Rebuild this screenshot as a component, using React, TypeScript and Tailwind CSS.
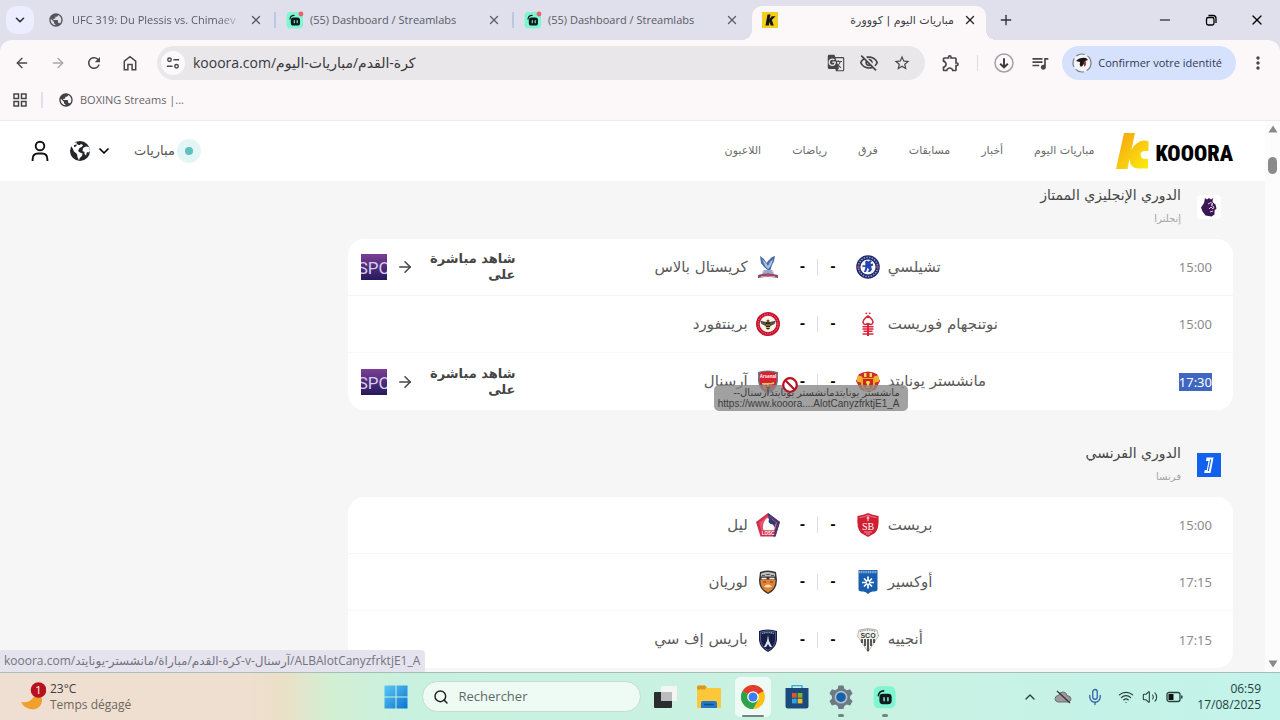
import type { ReactNode } from "react";
import {
  MdPublic,
  MdGTranslate,
  MdOutlineVisibilityOff,
  MdStarOutline,
  MdOutlineExtension,
  MdQueueMusic,
  MdMoreVert,
  MdRefresh,
  MdOutlineGridView,
} from "react-icons/md";
import {
  ArrowLeft,
  ArrowRight,
  ChevronDown,
  ChevronUp,
  Mic,
  Minus,
  Plus,
  Search,
  Volume2,
  Wifi,
  X,
} from "lucide-react";

const SHIELD = "M3 3Q12 0 21 3V12Q20 20 12 24Q4 20 3 12Z";

function Crest({ label, children }: { label: string; children: ReactNode }) {
  return (
    <svg viewBox="0 0 24 24" className="size-6 shrink-0" role="img" aria-label={label}>
      {children}
    </svg>
  );
}

const crests: Record<string, ReactNode> = {
  chelsea: (
    <>
      <circle cx="12" cy="12" r="11.8" fill="#1c2a6d" />
      <circle cx="12" cy="12" r="9.6" fill="none" stroke="#8d94c2" strokeWidth="1.6" strokeDasharray="1.5 1.2" />
      <circle cx="12" cy="12" r="7.6" fill="#f5f7ff" />
      <circle cx="2.4" cy="12" r="1.2" fill="#c23a52" />
      <circle cx="21.6" cy="12" r="1.2" fill="#c23a52" />
      <path d="M9 7l1.500-1.500 2 1 2-1.500 1.500 1.500-1.500 1 .5 1.500 2-.500v2l-2 1 1 3-2 2.500h-2l1-3-1.500-1-1.500 4H8l1.500-4.500-1.500-1-1.500 1V10l2 .500 1-1z" fill="#2742a8" />
    </>
  ),
  palace: (
    <>
      <path d="M4 1l4 3 2.500 4L12 6l4-4 3-1-1 5-2 4-1.500 5h-3L8 12 5 8z" fill="#4a6ba8" />
      <path d="M6 4l4 4 2 3 2-4 3-3-1 4-2 4-2 2-3-3z" fill="#a9bfde" />
      <path d="M7 15h10l2 6H5z" fill="#c8cedd" />
      <path d="M8 16h8M7 18h10" stroke="#5b74a8" strokeWidth=".8" />
      <path d="M2 20q10-3 20 0v3q-10-2-20 0z" fill="#8e4a6c" />
      <path d="M5 21.500h14" stroke="#d9c7d8" strokeWidth=".7" />
      <circle cx="12" cy="20" r="1.800" fill="#c8435a" />
    </>
  ),
  forest: (
    <>
      <path d="M12 4C8 6.500 6.200 9.500 7.500 11.500q1.500 1.800 4.500 0 3 1.800 4.500 0C17.800 9.500 16 6.500 12 4z" fill="none" stroke="#d9263a" strokeWidth="1.500" />
      <path d="M11 11h2v13h-2z" fill="#d9263a" />
      <path d="M6.500 14.800h11M6.500 17h11M7.500 19.200h9M6.500 22h11" stroke="#d9263a" strokeWidth="1.600" />
      <circle cx="10.300" cy="1.300" r=".9" fill="#d9263a" />
      <circle cx="13.700" cy="1.300" r=".9" fill="#d9263a" />
    </>
  ),
  brentford: (
    <>
      <circle cx="12" cy="12" r="12" fill="#c8102e" />
      <circle cx="12" cy="12" r="9.900" fill="none" stroke="#e98291" strokeWidth="1" strokeDasharray="1.300 1.200" />
      <circle cx="12" cy="12" r="8.300" fill="#fbf4ea" />
      <path d="M4 8.500l6 1.500h4l6-1.500-1.500 3.500-4 2h-5l-4-2z" fill="#5a5145" />
      <ellipse cx="12" cy="13.500" rx="2.300" ry="4" fill="#2a241c" />
      <path d="M10 13h4M10 15.500h4" stroke="#e6b94a" strokeWidth=".9" />
      <circle cx="12" cy="9" r="1.500" fill="#6a5335" />
    </>
  ),
  united: (
    <>
      <path d="M3 4Q12-1 21 4l3 7-4 8q-8 6-16 0L0 11z" fill="#c9302b" />
      <path d="M1 6.500q5-2 6 2l-2 4-4-1zM23 6.500q-5-2-6 2l2 4 4-1z" fill="#f0b32c" />
      <path d="M5 8h14v7q-2 6-7 7-5-1-7-7z" fill="#e9a726" />
      <path d="M7 9h10v5q-1 5-5 6-4-1-5-6z" fill="#cd2128" />
      <path d="M8 3h2.500v4H8zM13.500 3H16v4h-2.500z" fill="#f7d64a" />
      <path d="M10.500 11h3l.5 2-1 1 1 4h-4l1-4-1-1z" fill="#fbdc3b" />
    </>
  ),
  arsenal: (
    <>
      <path d="M2 2Q12-1 22 2v9q-1 9-10 13Q3 20 2 11z" fill="#6d7687" />
      <path d="M3.500 3Q12 0 20.500 3v8q-1 8-8.500 11.500Q4.500 19 3.500 11z" fill="#d8222f" />
      <text x="12" y="7.500" fontSize="4.500" fontWeight="700" textAnchor="middle" fill="#fff" fontFamily="Liberation Sans">Arsenal</text>
      <path d="M6 13h9l3-1v2l-3 .600H6z" fill="#e3c46a" />
      <circle cx="10" cy="16" r="2.300" fill="none" stroke="#e3c46a" strokeWidth="1.100" />
    </>
  ),
  brest: (
    <>
      <path d="M1.500 3Q8 2 12 0q4 2 10.500 3 1 13-3.500 17l-7 4-7-4Q.500 16 1.500 3z" fill="#d01e32" />
      <path d="M3.500 4.500Q9 4 12 2q3 2 8.500 2.500" fill="none" stroke="#f0a7ae" strokeWidth=".7" />
      <path d="M12 3v5M10.500 5h3" stroke="#fbdfe2" strokeWidth="1" />
      <text x="12" y="16.500" fontSize="10" textAnchor="middle" fill="#fff" fontFamily="Liberation Serif">SB</text>
      <path d="M8 19h8M10 21h4" stroke="#f0a7ae" strokeWidth=".9" />
    </>
  ),
  lille: (
    <>
      <path d="M12 0L24 9l-4.500 14.500h-15L0 9z" fill="#cf2e4c" />
      <path d="M12 0L24 9l-4.500 14.500H17L20.500 10 12 3.500z" fill="#3c3a78" />
      <path d="M12 2.800L21 9.800 17.800 21H6.200L3 9.800z" fill="#e8536b" />
      <path d="M11 5l6 2 2.500 4-1.500 6.500H7.500Q5.500 10 11 5z" fill="#fff" />
      <path d="M12 3l8 6.500-1.500 5-1.500-3-2.500-.500-2-2 .500-2.500z" fill="#2d3a72" />
      <path d="M5 17.500h14l-1 4.500H6z" fill="#cf2e4c" />
      <text x="12" y="21.500" fontSize="4.500" fontWeight="700" textAnchor="middle" fill="#fff" fontFamily="Liberation Sans">LOSC</text>
    </>
  ),
  auxerre: (
    <>
      <path d="M2.500 0h19v20q-1 1.500-5 1.500-3 .500-4.500 2.500-1.500-2-4.500-2.500-4 0-5-1.500z" fill="#1a5fae" />
      <path d="M3 2h18" stroke="#8cb4de" strokeWidth="2.400" strokeDasharray="1.200 .6" />
      <path d="M12 6.500v12M6 12.500h12M8 8.500l8 8M16 8.500l-8 8" stroke="#fff" strokeWidth="1.700" />
      <circle cx="12" cy="12.500" r="1.200" fill="#1a5fae" />
    </>
  ),
  lorient: (
    <>
      <path d="M4 2Q12-1 20 2l1 8q0 10-9 14-9-4-9-14z" fill="#3a3538" />
      <path d="M4.500 9.500h15q.5 9.500-7.500 13Q4 19 4.500 9.500z" fill="#e2812f" />
      <path d="M5 3.500q7-3 14 0v3H5z" fill="#bdbcc0" />
      <path d="M6 5.500h3M10 4.500h4M15 5.500h3" stroke="#56525a" strokeWidth="1" />
      <path d="M5.500 8.500h5M13.500 8.500h5" stroke="#f2ece6" strokeWidth="1.300" />
      <path d="M8 16.500q4-4 8 0-4 2-8 0z" fill="#f3e1cc" />
      <path d="M7 12h3M14 12h3" stroke="#6d4426" strokeWidth="1.200" />
    </>
  ),
  angers: (
    <>
      <path d="M3 2Q12-1 21 2l1.500 6L12 24 1.500 8z" fill="#f1f1ee" stroke="#8d8d88" strokeWidth=".6" />
      <path d="M4 3.500Q12 .500 20 3.500" fill="none" stroke="#85857e" strokeWidth="1.300" strokeDasharray="1 .8" />
      <text x="12" y="10" fontSize="7" fontWeight="700" textAnchor="middle" fill="#3b3b38" fontFamily="Liberation Sans">SCO</text>
      <path d="M6 11v4M9 11v7M12 11v12M15 11v7M18 11v4" stroke="#262624" strokeWidth="1.500" />
    </>
  ),
  paris: (
    <>
      <path d={SHIELD} fill="#171f45" />
      <path d="M4.500 4Q12 1.500 19.500 4v8q-1 7-7.500 10.300Q5.500 19 4.500 12z" fill="none" stroke="#6574a4" strokeWidth=".7" />
      <path d="M6 5.500q6-2 12 0" stroke="#8d9ac0" strokeWidth="1.500" fill="none" strokeDasharray="1.200 .6" />
      <path d="M12 7l1 6 3 6h-2.200L12 16l-1.800 3H8l3-6z" fill="#dce4f5" />
    </>
  ),
};

function StreamlabsIcon({ className, badge }: { className: string; badge?: boolean }) {
  return (
    <svg viewBox="0 0 18 18" className={className} aria-hidden="true">
      <rect x="0.500" y="1" width="16.500" height="16.500" rx="4" fill="#80f5d2" />
      <path d="M4 8q.600-3.500 4-3.600" stroke="#0b1a1c" strokeWidth="1.200" fill="none" strokeLinecap="round" />
      <rect x="4.800" y="6.500" width="9.200" height="8" rx="2.600" fill="#0b1a1c" />
      <path d="M8.300 9.600v2.200M11.200 9.600v2.200" stroke="#80f5d2" strokeWidth="1.100" strokeLinecap="round" />
      {badge && <circle cx="15" cy="3" r="2.400" fill="#e5636f" />}
    </svg>
  );
}

function TabClose() {
  return (
    <button aria-label="Fermer l'onglet" className="ml-auto flex size-4 items-center justify-center">
      <X className="size-3.5" strokeWidth={2.200} />
    </button>
  );
}

function TabStrip() {
  return (
    <div className="flex h-10 shrink-0 items-end bg-[#dfe0eb] text-[#2f3037]">
      <button aria-label="Rechercher dans les onglets" className="mb-1.5 ml-1.5 flex size-7 shrink-0 items-center justify-center rounded-[10px] bg-[#eceeff]">
        <ChevronDown className="size-3.5" strokeWidth={2.800} />
      </button>
      <div role="tablist" className="flex min-w-0 self-stretch text-[11px] text-[#5a5b64]">
        <div className="flex w-[242px] min-w-0 items-center pl-3.5">
          <MdPublic className="size-4 shrink-0 text-[#55565c]" />
          <button role="tab" aria-selected="false" className="ml-2 w-[172px] overflow-hidden text-left whitespace-nowrap [mask-image:linear-gradient(to_right,#000_85%,transparent)]">
            UFC 319: Du Plessis vs. Chimaev
          </button>
          <TabClose />
          <span className="ml-2.5 h-4 w-0.5 shrink-0 bg-[#b9c9e4]" />
        </div>
        {[0, 1].map((i) => (
          <div key={i} className="flex w-[238px] min-w-0 items-center pl-2.5">
            <StreamlabsIcon className="size-[18px] shrink-0" badge />
            <button role="tab" aria-selected="false" className="ml-1.5 truncate text-left">
              (55) Dashboard / Streamlabs
            </button>
            <TabClose />
            <span className={i === 0 ? "ml-2.5 h-4 w-0.5 shrink-0 bg-[#b9c9e4]" : "ml-2.5 w-0.5 shrink-0"} />
          </div>
        ))}
        <div className="relative mt-1.5 flex w-[234px] min-w-0 items-center rounded-t-[10px] bg-[#fcf8f9] pr-2 pl-2.5">
          <span className="absolute bottom-0 -left-2.5 size-2.5 bg-[radial-gradient(circle_at_0_0,transparent_10px,#fcf8f9_10px)]" />
          <span className="absolute -right-2.5 bottom-0 size-2.5 bg-[radial-gradient(circle_at_100%_0,transparent_10px,#fcf8f9_10px)]" />
          <svg viewBox="0 0 16 16" className="mb-1.5 size-4 shrink-0" aria-hidden="true">
            <rect width="16" height="16" fill="#f2cf1d" />
            <path d="M5.500 2.500h3l-.9 4.300 2.200-2.500h3.700L9.800 8l2 5.500H8.700L7.500 9.800l-.6 3.700H3.500z" fill="#16140a" />
          </svg>
          <button role="tab" aria-selected="true" dir="rtl" className="mb-1 ml-auto font-['DejaVu_Sans',sans-serif] text-[11px] text-[#3c3d42]">
            مباريات اليوم | كووورة
          </button>
          <button aria-label="Fermer l'onglet" className="mb-1.5 ml-2 flex size-4 items-center justify-center text-[#222]">
            <X className="size-3.5" strokeWidth={2.200} />
          </button>
        </div>
      </div>
      <button aria-label="Nouvel onglet" className="mb-3 ml-3 flex size-4 items-center justify-center">
        <Plus className="size-4" />
      </button>
      <div className="ml-auto flex items-center gap-[30px] pr-[15px] pb-3 text-black">
        <button aria-label="Réduire"><Minus className="size-4" strokeWidth={1.500} /></button>
        <button aria-label="Restaurer">
          <svg viewBox="0 0 16 16" className="size-4" fill="none" stroke="currentColor" strokeWidth="1.300" aria-hidden="true">
            <rect x="3.500" y="5.500" width="7.500" height="7.500" rx="1.800" />
            <path d="M5.500 3.500h4.500a3 3 0 0 1 3 3V11" />
          </svg>
        </button>
        <button aria-label="Fermer"><X className="size-4" strokeWidth={1.800} /></button>
      </div>
    </div>
  );
}

function Toolbar() {
  return (
    <div className="relative flex h-[46px] shrink-0 items-center rounded-t-xl bg-[#fcf8f9] px-3 text-[#47474a]">
      <div className="flex gap-4">
        <button aria-label="Retour" className="flex size-5 items-center justify-center"><ArrowLeft className="size-4" /></button>
        <button aria-label="Avancer" className="flex size-5 items-center justify-center text-[#a9a6aa]"><ArrowRight className="size-4" /></button>
        <button aria-label="Actualiser" className="flex size-5 items-center justify-center"><MdRefresh className="size-[18px]" /></button>
        <button aria-label="Accueil" className="flex size-5 items-center justify-center">
          <svg viewBox="0 0 18 18" className="size-[18px]" fill="none" stroke="currentColor" strokeWidth="1.500" aria-hidden="true">
            <path d="M3.300 15.700V7.100L9 2.700l5.700 4.400v8.600h-3.600v-5.200H6.900v5.200z" />
          </svg>
        </button>
      </div>
      <div className="ml-[17px] flex h-[34px] min-w-0 flex-1 items-center rounded-full bg-[#e9e7ea] pr-3.5 pl-1">
        <button aria-label="Informations sur le site" className="flex size-6 items-center justify-center rounded-full bg-[#fcf9fb]">
          <svg viewBox="0 0 16 16" className="size-3.5" fill="none" stroke="currentColor" strokeWidth="1.600" aria-hidden="true">
            <circle cx="4" cy="4.300" r="2" />
            <path d="M8.500 4.300H15M1 11.700h6.500" />
            <circle cx="12" cy="11.700" r="2" />
          </svg>
        </button>
        <input
          aria-label="Adresse"
          className="ml-2 min-w-0 flex-1 bg-transparent text-sm text-[#37373b] outline-none"
          defaultValue="kooora.com/كرة-القدم/مباريات-اليوم"
        />
        <div className="flex items-center gap-3.5">
          <button aria-label="Traduire"><MdGTranslate className="size-[18px]" /></button>
          <button aria-label="Suivi bloqué"><MdOutlineVisibilityOff className="size-5" /></button>
          <button aria-label="Favori"><MdStarOutline className="size-[18px]" /></button>
        </div>
      </div>
      <button aria-label="Extensions" className="ml-4"><MdOutlineExtension className="size-5" /></button>
      <span className="ml-4 h-4 w-px bg-[#d8dcf0]" />
      <button aria-label="Téléchargements" className="ml-4">
        <svg viewBox="0 0 20 20" className="size-5" fill="none" aria-hidden="true">
          <circle cx="10" cy="10" r="9" stroke="#a3a1a5" strokeWidth="1.500" />
          <path d="M10 5.300v9M6.200 10.700L10 14.400l3.800-3.700" stroke="#3a3a3e" strokeWidth="1.900" />
        </svg>
      </button>
      <button aria-label="Musique" className="ml-4"><MdQueueMusic className="size-5" /></button>
      <button className="ml-3 flex h-[34px] items-center gap-1.5 rounded-full bg-[#d6e2fd] pr-3.5 pl-2.5 text-[11px] text-[#2e3b5a]">
        <svg viewBox="0 0 20 20" className="size-5" aria-hidden="true">
          <circle cx="10" cy="10" r="9" fill="#f3f4f8" stroke="#777b85" strokeWidth="1.200" strokeDasharray="9 3" />
          <path d="M4 8q4-4 10-3l2 2-3 1q-1 4-4 6-2-2-1-5z" fill="#1c1518" />
          <path d="M12 9l2-1v4l-2 2z" fill="#a33a44" />
        </svg>
        Confirmer votre identité
      </button>
      <button aria-label="Menu" className="ml-3"><MdMoreVert className="size-5" /></button>
    </div>
  );
}

function BookmarksBar() {
  return (
    <div className="flex h-[35px] shrink-0 items-center border-b border-[#ececec] bg-[#fcf8f9] px-[11px] pb-1.5 text-[#47474a]">
      <button aria-label="Groupes d'onglets"><MdOutlineGridView className="size-[18px]" /></button>
      <span className="ml-3 h-4 w-0.5 bg-[#dde0f0]" />
      <a href="#boxing" className="ml-[15px] flex items-center gap-1.5 text-[11px] text-[#66666b]">
        <MdPublic className="size-4 text-[#3f4043]" />
        BOXING Streams |...
      </a>
    </div>
  );
}

const nav = ["مباريات اليوم", "أخبار", "مسابقات", "فرق", "رياضات", "اللاعبون"];

function SiteHeader() {
  return (
    <header className="flex h-[60px] shrink-0 items-center justify-between bg-white px-8 font-['DejaVu_Sans',sans-serif]">
      <div className="flex items-center">
        <button aria-label="الحساب" className="-ml-0.5">
          <svg viewBox="0 0 20 22" className="h-[22px] w-5" fill="none" stroke="#111" strokeWidth="1.900" aria-hidden="true">
            <circle cx="10" cy="6" r="4.300" />
            <path d="M2.600 21v-1.500q0-6 5.400-6h4q5.400 0 5.400 6V21" />
          </svg>
        </button>
        <button aria-label="اللغة" className="ml-5 flex items-center gap-1.5">
          <svg viewBox="0 0 20 20" className="size-5" aria-hidden="true">
            <circle cx="10" cy="10" r="10" fill="#25262a" />
            <path d="M1 5l2.500-3L7 1.500 6.500 3l3 1.300L11 3l2 1-1 1.700L9.500 7 8 10l2 1.500 2.500 1-.5 2.500-2.300 2L9 19.500 7.500 16 7 13 4 10.500 2.500 7z" fill="#fff" />
            <path d="M13 7l3-1.500 3 .5 1 4-1.500 1.500-1.500-.5-1 3.500-1.500-1.500V11l-2-1z" fill="#fff" />
            <path d="M4 4l3-.500-1 2-2 .500z" fill="#25262a" />
          </svg>
          <ChevronDown className="size-4 text-black" strokeWidth={2.600} />
        </button>
        <a href="#live" className="ml-[22px] flex items-center gap-0.5 text-[13px] text-[#555]">
          <span dir="rtl">مباريات</span>
          <span className="flex size-6 items-center justify-center rounded-full bg-[#e3f6f5]">
            <span className="size-2 rounded-full bg-[#5fc0bd]" />
          </span>
        </a>
      </div>
      <div dir="rtl" className="flex items-center">
        <a href="#home" aria-label="KOOORA" dir="ltr" className="flex items-center gap-1.5">
          <svg viewBox="0 0 33 36" className="h-9 w-[33px]" aria-hidden="true">
            <defs>
              <linearGradient id="mark" x1="0" y1="0" x2="1" y2="1">
                <stop offset="0.200" stopColor="#f7b011" />
                <stop offset="1" stopColor="#fbee0c" />
              </linearGradient>
            </defs>
            <path d="M8 0h11l-3.600 17Q20 8 28 7.500q3 0 4.500 1V18h-3.500q-4 0-4.500 3.500.300 4 4 4.500h3.500v9.500H22Q14 35 13.500 26L11.500 36H0z" fill="url(#mark)" />
          </svg>
          <span className="mt-1.5 font-['Liberation_Sans_Narrow','Roboto_Condensed',sans-serif] text-[22px] leading-6 font-black text-black">KOOORA</span>
        </a>
        <nav className="mr-[22px] flex gap-[31px] text-[11px] text-[#6b6b6b]">
          {nav.map((n) => (
            <a key={n} href="#nav">{n}</a>
          ))}
        </nav>
      </div>
    </header>
  );
}

type Match = { time: string; home: string; homeCrest: string; away: string; awayCrest: string; live?: boolean; picked?: boolean };

const leagues: { id: string; name: string; country: string; logo: ReactNode; matches: Match[] }[] = [
  {
    id: "pl",
    name: "الدوري الإنجليزي الممتاز",
    country: "إنجلترا",
    logo: (
      <>
        <rect width="24" height="24" rx="4" fill="#fff" />
        <path d="M8 3l2 1.500L12 3l2 1.500L16 3l-.500 4 3 2.500 1 4-2 2v4l-3 2-6-1-3-4-1.500-4L7 8z" fill="#3c1655" />
        <path d="M11 9l3-1.500L16 9l-2 1 3 2-1 2-2-2-2 2M13 17l3-1" stroke="#d8cbe2" strokeWidth="1" fill="none" />
      </>
    ),
    matches: [
      { time: "15:00", home: "تشيلسي", homeCrest: "chelsea", away: "كريستال بالاس", awayCrest: "palace", live: true },
      { time: "15:00", home: "نوتنجهام فوريست", homeCrest: "forest", away: "برينتفورد", awayCrest: "brentford" },
      { time: "17:30", home: "مانشستر يونايتد", homeCrest: "united", away: "آرسنال", awayCrest: "arsenal", live: true, picked: true },
    ],
  },
  {
    id: "l1",
    name: "الدوري الفرنسي",
    country: "فرنسا",
    logo: (
      <>
        <rect width="24" height="24" fill="#1160ee" />
        <path d="M9.500 4.500h7L13.600 20H7.200l.6-3h2l1.700-9H9z" fill="#fff" />
        <path d="M13.700 6.500L11.300 18" stroke="#1160ee" strokeWidth="1.200" />
      </>
    ),
    matches: [
      { time: "15:00", home: "بريست", homeCrest: "brest", away: "ليل", awayCrest: "lille" },
      { time: "17:15", home: "أوكسير", homeCrest: "auxerre", away: "لوريان", awayCrest: "lorient" },
      { time: "17:15", home: "أنجييه", homeCrest: "angers", away: "باريس إف سي", awayCrest: "paris" },
    ],
  },
];

function DragGhost() {
  return (
    <div className="absolute top-[15px] -left-[34px] z-10 w-[194px] rounded-[5px] bg-[#8a8a8a]/80 px-1 py-0.5 font-['Liberation_Sans','DejaVu_Sans',sans-serif] text-[10px] leading-[11px] whitespace-nowrap text-[#3c3c3c]">
      <p dir="rtl" className="pr-1 text-[10px]">مانشستر يونايتدمانشستر يونايتدآرسنال--</p>
      <p>https://www.kooora....AlotCanyzfrktjE1_A</p>
      <svg viewBox="0 0 16 16" className="absolute -top-2 left-[68px] size-4" fill="none" aria-hidden="true">
        <circle cx="8" cy="8" r="6.800" fill="#fff" stroke="#b5121f" strokeWidth="2.200" />
        <path d="M3.500 3.500l9 9" stroke="#b5121f" strokeWidth="2.200" />
      </svg>
    </div>
  );
}

function MatchRow({ m }: { m: Match }) {
  return (
    <li className="grid h-[57px] grid-cols-[168px_1fr_140px_1fr_113px] items-center border-b border-[#f9f9f9] text-[15px] text-[#5a5a5a] first:border-[#f6f6f6] last:border-0">
      {m.live ? (
        <a href="#watch" className="flex items-center pl-[13px] text-[#454545]">
          <svg viewBox="0 0 26 26" className="size-[26px] shrink-0" role="img" aria-label="SPORT">
            <defs>
              <linearGradient id="spo" x1="0" y1="0" x2="0" y2="1">
                <stop offset="0" stopColor="#7a3f95" />
                <stop offset="1" stopColor="#241a5c" />
              </linearGradient>
            </defs>
            <rect width="26" height="26" fill="url(#spo)" />
            <text x="13" y="19.500" fontSize="17" textAnchor="middle" fill="#d9cdf0" fontFamily="Roboto">SPO</text>
          </svg>
          <ArrowRight className="ml-[9px] size-[18px] shrink-0" strokeWidth={2} />
          <span dir="rtl" className="ml-auto text-[13px] leading-4 font-bold whitespace-nowrap">
            شاهد مباشرة
            <br />
            على
          </span>
        </a>
      ) : (
        <span />
      )}
      <span dir="rtl" className="whitespace-nowrap">{m.away}</span>
      <div className="relative flex items-center justify-between px-2">
        <Crest label={m.away}>{crests[m.awayCrest]}</Crest>
        <div className="flex items-center gap-3 text-[13px] font-bold text-black">
          <span>-</span>
          <span className="h-4 w-px bg-[#dcdcdc]" />
          <span>-</span>
        </div>
        <Crest label={m.home}>{crests[m.homeCrest]}</Crest>
        {m.picked && <DragGhost />}
      </div>
      <span className="text-left whitespace-nowrap">{m.home}</span>
      <time className="mr-[21px] justify-self-end font-['Noto_Sans',sans-serif] text-[13px] leading-[18px] text-[#8b8b8b]">
        {m.picked ? <mark className="block bg-[#3f66c0] text-white">{m.time}</mark> : m.time}
      </time>
    </li>
  );
}

function Page() {
  return (
    <main className="min-h-0 flex-1 overflow-hidden bg-[#f6f6f6] font-['DejaVu_Sans',sans-serif]">
      <div className="mr-8 ml-auto flex w-[70%] flex-col gap-[29px]">
        {leagues.map((l) => (
          <section key={l.id}>
            <div dir="rtl" className="flex h-[58px] gap-4 pr-3">
              <svg viewBox="0 0 24 24" className="mt-3.5 size-6" aria-hidden="true">{l.logo}</svg>
              <div className="pt-0.5">
                <h2 className="text-sm leading-6 text-[#454545]">{l.name}</h2>
                <p className="mt-0.5 text-[10px] leading-5 text-[#a5a5a5]">{l.country}</p>
              </div>
            </div>
            <ul className="rounded-2xl bg-white">
              {l.matches.map((m) => (
                <MatchRow key={m.home} m={m} />
              ))}
            </ul>
          </section>
        ))}
      </div>
    </main>
  );
}

function Scrollbar() {
  return (
    <div className="flex w-[15px] shrink-0 flex-col items-center bg-[#fcfcfc] py-1 text-[#8a8a8a]" aria-hidden="true">
      <svg viewBox="0 0 10 8" className="h-2 w-2.5" fill="currentColor"><path d="M5 .500L9.500 7.500h-9z" /></svg>
      <span className="mt-6 h-[17px] w-[9px] rounded-full bg-[#8a8a8a]" />
      <svg viewBox="0 0 10 8" className="mt-auto h-2 w-2.5" fill="currentColor"><path d="M5 7.500L9.500.500h-9z" /></svg>
    </div>
  );
}

function Taskbar() {
  return (
    <footer className="grid h-12 shrink-0 grid-cols-[1fr_auto_1fr] items-center border-t border-[#a9bdb8] bg-[linear-gradient(90deg,#efdfd2_0%,#efdfd0_19%,#ebe0c6_22%,#d2efd4_26%,#c8f1e0_32%,#c9f2e3_70%,#c2f3ea_100%)] text-xs text-[#3d3d40]">
      <div className="flex items-center gap-2 pl-5">
        <svg viewBox="0 0 26 30" className="h-[30px] w-[26px]" aria-hidden="true">
          <path d="M1 20q7 1 11-3 3-3 4-6 7 3 6 9-2 7-9 7.500Q4 27 1 20z" fill="#f0a02c" />
          <circle cx="18.500" cy="8" r="7.800" fill="#b9121f" />
          <text x="18.500" y="11.800" fontSize="11" textAnchor="middle" fill="#fff" fontFamily="Open Sans">1</text>
        </svg>
        <div className="-ml-1 leading-4">
          <p>23°C</p>
          <p className="text-[#6d675f]">Temps dégagé</p>
        </div>
      </div>
      <div className="flex items-center">
        <button aria-label="Démarrer" className="flex w-11 justify-center">
          <svg viewBox="0 0 24 24" className="size-6" aria-hidden="true">
            <defs>
              <linearGradient id="win" x1="0" y1="0" x2="1" y2="1">
                <stop offset="0" stopColor="#5cc8f5" />
                <stop offset="1" stopColor="#0a74cf" />
              </linearGradient>
            </defs>
            <path d="M.500.500h11v11H.500zM12.500.500h11v11h-11zM.500 12.500h11v11H.500zM12.500 12.500h11v11h-11z" fill="url(#win)" />
          </svg>
        </button>
        <label className="mr-0.5 ml-1 flex h-[31px] w-[219px] items-center rounded-full border border-[#c4dcd5] bg-[#eefbf5] pl-2.5">
          <Search className="size-4 text-[#222]" strokeWidth={2.200} />
          <span className="sr-only">Rechercher</span>
          <input type="search" placeholder="Rechercher" className="ml-2.5 w-0 flex-1 bg-transparent text-[13px] outline-none placeholder:text-[#5c6a66]" />
        </label>
        <button aria-label="Vue des tâches" className="flex w-11 justify-center">
          <svg viewBox="0 0 24 24" className="size-6" aria-hidden="true">
            <rect x="1" y="7" width="18" height="16" rx="1" fill="#2b2c2d" />
            <rect x="8" y="1" width="16" height="15" rx="1" fill="#f3f5f4" />
            <rect x="8" y="7" width="11" height="9" fill="#b9bdbc" />
          </svg>
        </button>
        <button aria-label="Explorateur" className="flex w-11 justify-center">
          <svg viewBox="0 0 26 24" className="h-6 w-[26px]" aria-hidden="true">
            <path d="M1 2q0-1.500 1.500-1.500H9L11.500 3H24q1 0 1 1v18q0 1-1 1H2q-1 0-1-1z" fill="#fbc83b" />
            <path d="M1 2q0-1.500 1.500-1.500H9L10.500 2 9 4.500H1z" fill="#d99a1c" />
            <path d="M5 23v-5q0-2 2-2h12q2 0 2 2v5z" fill="#2378c8" />
            <path d="M8 19.500h10" stroke="#124f8d" strokeWidth="1.500" />
          </svg>
        </button>
        <button aria-label="Chrome" className="flex w-11 justify-center">
          <span className="relative flex h-10 w-9 items-center justify-center rounded-[5px] bg-[#eefaf5]">
            <svg viewBox="0 0 24 24" className="size-6" aria-hidden="true">
              <circle cx="12" cy="12" r="12" fill="#fbc116" />
              <path d="M12 12L1.600 6A12 12 0 0 1 22.400 6z" fill="#e33b2e" />
              <path d="M1.600 6A12 12 0 0 0 12 24l5.200-9L12 12z" fill="#2ba24c" />
              <path d="M12 6h10.400" stroke="#e33b2e" />
              <circle cx="12" cy="12" r="5.800" fill="#fff" />
              <circle cx="12" cy="12" r="4.500" fill="#3b7ded" />
            </svg>
            <span className="absolute bottom-0 h-0.5 w-[22px] rounded bg-[#75827e]" />
          </span>
        </button>
        <button aria-label="Microsoft Store" className="flex w-11 justify-center">
          <svg viewBox="0 0 24 24" className="size-6" aria-hidden="true">
            <path d="M7 4V1.500Q7 .500 8 .500h8q1 0 1 1V4" fill="none" stroke="#3ba7e8" strokeWidth="1.500" />
            <path d="M.500 3h23v18q0 2.500-2.500 2.500H3Q.500 23.500.500 21z" fill="#1c4a7c" />
            <path d="M7 8h4.700v4.700H7z" fill="#e8512d" />
            <path d="M12.700 8h4.700v4.700h-4.700z" fill="#7db72f" />
            <path d="M7 13.700h4.700v4.700H7z" fill="#2ca4e6" />
            <path d="M12.700 13.700h4.700v4.700h-4.700z" fill="#f6bb23" />
          </svg>
        </button>
        <button aria-label="Paramètres" className="relative flex w-11 justify-center">
          <svg viewBox="0 0 24 24" className="size-6" aria-hidden="true">
            <path d="M9.500.500h5l.8 3.300 2.500 1.500 3.300-1 2.500 4.300-2.500 2.300v2.900l2.500 2.300-2.500 4.300-3.300-1-2.500 1.500-.8 3.100h-5l-.8-3.100-2.500-1.500-3.300 1L.400 16.100l2.500-2.300v-2.900L.400 8.600l2.500-4.300 3.300 1 2.500-1.500z" fill="#6d7a86" />
            <circle cx="12" cy="12.200" r="6.400" fill="#b4bfc6" />
            <circle cx="12" cy="12.200" r="4.800" fill="#1461ad" />
          </svg>
          <span className="absolute -bottom-2 h-[3px] w-1.5 rounded-full bg-[#6f8780]" />
        </button>
        <button aria-label="Streamlabs" className="relative flex w-11 justify-center">
          <StreamlabsIcon className="size-6" />
          <span className="absolute -bottom-2 h-[3px] w-1.5 rounded-full bg-[#6f8780]" />
        </button>
      </div>
      <div className="flex items-center justify-end pr-[19px] text-[#25413c]">
        <button aria-label="Icônes cachées"><ChevronUp className="size-4" /></button>
        <svg viewBox="0 0 18 16" className="ml-4 h-4 w-[18px]" aria-hidden="true">
          <path d="M4 13Q1 12.500 1 9.500 1.500 6.500 4.500 6.500 6 2.500 9.500 3q3 .5 3.500 3.500 4 .5 4 3.500-.300 3-3.500 3z" fill="#9d9a9d" stroke="#6e6a6e" />
          <path d="M3 2l13 12" stroke="#3a3335" strokeWidth="1.300" />
        </svg>
        <Mic className="ml-3.5 size-[18px] text-[#3a66a8]" strokeWidth={1.800} />
        <Wifi className="ml-3.5 size-4" strokeWidth={1.800} />
        <Volume2 className="ml-2 size-4" strokeWidth={1.600} />
        <svg viewBox="0 0 17 12" className="ml-2 h-3 w-[17px]" fill="none" stroke="currentColor" aria-hidden="true">
          <rect x="1" y="1.500" width="13" height="9" rx="2" strokeWidth="1.300" />
          <rect x="2.500" y="3" width="5" height="6" fill="#111" stroke="none" />
          <path d="M15.800 4.500v3" strokeWidth="1.500" />
        </svg>
        <div className="ml-3.5 text-right leading-4">
          <p>06:59</p>
          <p>17/08/2025</p>
        </div>
      </div>
    </footer>
  );
}

export default function App() {
  return (
    <div className="flex h-screen flex-col overflow-hidden bg-[#dfe0eb] font-['Open_Sans','DejaVu_Sans',sans-serif]">
      <TabStrip />
      <Toolbar />
      <BookmarksBar />
      <div className="relative flex min-h-0 flex-1">
        <div className="flex min-w-0 flex-1 flex-col">
          <SiteHeader />
          <Page />
        </div>
        <Scrollbar />
        <div className="absolute bottom-0 left-0 flex h-[22px] w-[425px] items-center overflow-hidden rounded-tr bg-[#e5e3ee] pl-1 text-xs whitespace-nowrap text-[#74747f]">
          kooora.com/كرة-القدم/مباراة/مانشستر-يونايتد-v-آرسنال/ALBAlotCanyzfrktjE1_A
        </div>
      </div>
      <Taskbar />
    </div>
  );
}
